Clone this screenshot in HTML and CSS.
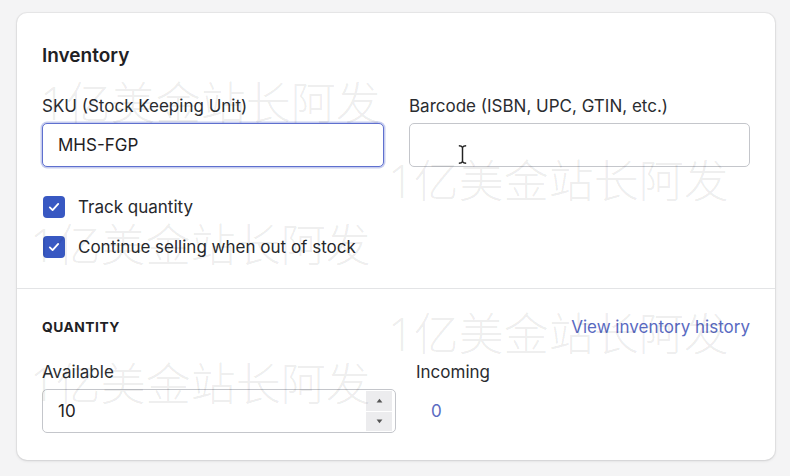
FILE: index.html
```html
<!DOCTYPE html>
<html lang="en">
<head>
<meta charset="utf-8">
<title>Inventory</title>
<link rel="stylesheet" href="styles.css">
</head>
<body>
<div class="page">
  <div class="card">
    <section class="section section-top">
      <h2 class="card-title">Inventory</h2>
      <div class="fields">
        <div class="field">
          <label class="label">SKU (Stock Keeping Unit)</label>
          <div class="input input-focused">MHS-FGP</div>
        </div>
        <div class="field">
          <label class="label">Barcode (ISBN, UPC, GTIN, etc.)</label>
          <div class="input"></div>
        </div>
      </div>
      <div class="checks">
        <div class="check">
          <span class="box"><svg viewBox="0 0 20 20" width="14" height="14"><path d="M4 10.5l4 4 8-9" fill="none" stroke="#fff" stroke-width="2.6" stroke-linecap="round" stroke-linejoin="round"/></svg></span>
          <span class="check-label">Track quantity</span>
        </div>
        <div class="check">
          <span class="box"><svg viewBox="0 0 20 20" width="14" height="14"><path d="M4 10.5l4 4 8-9" fill="none" stroke="#fff" stroke-width="2.6" stroke-linecap="round" stroke-linejoin="round"/></svg></span>
          <span class="check-label">Continue selling when out of stock</span>
        </div>
      </div>
    </section>
    <section class="section section-bottom">
      <div class="sub-head">
        <h3 class="subheading">QUANTITY</h3>
        <a class="link">View inventory history</a>
      </div>
      <div class="qty-row">
        <div class="qty-col">
          <label class="label">Available</label>
          <div class="input number-input">
            <span class="num">10</span>
            <span class="spinner">
              <span class="spin-btn"><svg viewBox="0 0 8 6" width="7" height="5"><path d="M0.5 5.5L4 1l3.5 4.5z" fill="#555"/></svg></span>
              <span class="spin-btn"><svg viewBox="0 0 8 6" width="7" height="5"><path d="M0.5 0.5L4 5l3.5-4.5z" fill="#555"/></svg></span>
            </span>
          </div>
        </div>
        <div class="incoming-col">
          <label class="label">Incoming</label>
          <a class="incoming-val">0</a>
        </div>
      </div>
    </section>
  </div>
  <svg class="cursor" viewBox="0 0 12 22" width="11" height="21"><path d="M2 1.5c2 0 3.3.6 4 1.8.7-1.2 2-1.8 4-1.8M2 20.5c2 0 3.3-.6 4-1.8.7 1.2 2 1.8 4 1.8M6 3.3v15.4" fill="none" stroke="#222" stroke-width="1.6"/></svg>
  <div class="watermarks" aria-hidden="true">
    <span class="wm wm1">1亿美金站长阿发</span>
    <span class="wm wm2">1亿美金站长阿发</span>
    <span class="wm wm3">1亿美金站长阿发</span>
    <span class="wm wm4">1亿美金站长阿发</span>
    <span class="wm wm5">1亿美金站长阿发</span>
  </div>
</div>
</body>
</html>
```
FILE: styles.css
```css
* { box-sizing: border-box; }
html, body { margin: 0; padding: 0; }
body {
  background: #f4f4f5;
  font-family: "Inter", "Noto Sans", sans-serif;
  color: #212326;
  width: 790px;
  height: 476px;
  overflow: hidden;
}
.page {
  position: relative;
  padding: 13px 15px 0 17px;
  height: 476px;
}
.card {
  background: #fff;
  border-radius: 10px;
  box-shadow: 0 0 0 1px rgba(63,63,68,0.06), 0 1px 3px rgba(63,63,68,0.16);
  height: 447px;
  display: flex;
  flex-direction: column;
}
.section { padding: 0 25px; }
.section-top {
  padding-top: 30px;
  padding-bottom: 30px;
  border-bottom: 1px solid #e3e4e6;
}
.card-title {
  margin: 0;
  font-size: 19px;
  line-height: 25px;
  font-weight: 600;
  color: #1f2124;
}
.fields {
  display: grid;
  grid-template-columns: 342px 341px;
  column-gap: 25px;
  margin-top: 27px;
}
.field { display: flex; flex-direction: column; }
.label {
  font-size: 17px;
  line-height: 22px;
  color: #2a2c30;
  margin-bottom: 6px;
}
.input {
  height: 44px;
  border: 1px solid #c4c6cb;
  border-radius: 5px;
  padding: 0 15px;
  display: flex;
  align-items: center;
  font-size: 17px;
  color: #1f2124;
  background: #fff;
}
.input-focused {
  border: 1.5px solid #5f70cf;
  box-shadow: 0 0 0 1.5px rgba(95,112,207,0.35);
}
.checks {
  margin-top: 29px;
  display: flex;
  flex-direction: column;
  gap: 18px;
}
.check {
  display: flex;
  align-items: center;
  height: 22px;
  margin-left: 1px;
}
.box {
  width: 22px;
  height: 22px;
  border-radius: 4px;
  background: #3858c2;
  display: flex;
  align-items: center;
  justify-content: center;
  margin-right: 13px;
}
.check-label {
  font-size: 17px;
  color: #26282c;
}
.section-bottom {
  padding-top: 27px;
  flex: 1;
}
.sub-head {
  display: flex;
  justify-content: space-between;
  align-items: center;
  height: 22px;
}
.subheading {
  margin: 0;
  font-size: 13.8px;
  font-weight: 700;
  letter-spacing: 0.5px;
  color: #1f2124;
}
.link {
  font-size: 17px;
  color: #5a6bc2;
  cursor: pointer;
}
.qty-row {
  display: flex;
  gap: 20px;
  margin-top: 23px;
}
.qty-col { width: 354px; display: flex; flex-direction: column; }
.number-input {
  justify-content: space-between;
  padding-right: 3px;
}
.spinner {
  display: flex;
  flex-direction: column;
  gap: 1px;
  width: 26px;
  height: 40px;
}
.spin-btn {
  flex: 1;
  background: #ececee;
  display: flex;
  align-items: center;
  justify-content: center;
}
.incoming-col { display: flex; flex-direction: column; }
.incoming-val {
  height: 44px;
  display: flex;
  align-items: center;
  padding-left: 15px;
  font-size: 17px;
  color: #5a6bc2;
}
.cursor {
  position: absolute;
  left: 457px;
  top: 144px;
}
.watermarks {
  position: absolute;
  inset: 0;
  pointer-events: none;
}
.wm {
  position: absolute;
  font-family: "Noto Sans", "Noto Sans CJK SC", sans-serif;
  font-size: 45px;
  font-weight: 300;
  line-height: 1;
  color: rgba(0,0,0,0.08);
  white-space: nowrap;
}
.wm1 { left: 40px; top: 80px; }
.wm2 { left: 388px; top: 158px; }
.wm3 { left: 30px; top: 222px; }
.wm4 { left: 388px; top: 311px; }
.wm5 { left: 30px; top: 361px; }
```
